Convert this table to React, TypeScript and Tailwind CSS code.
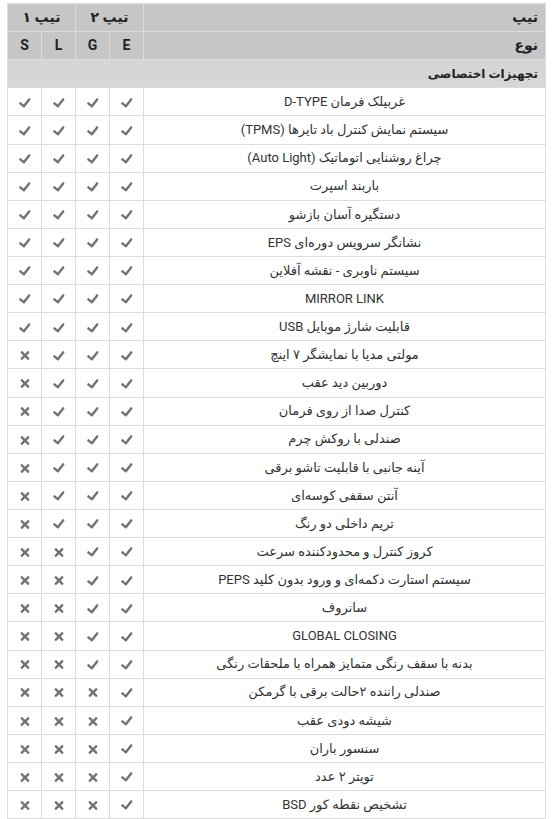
import React from 'react';

type Mark = 1 | 0;

const features: { name: string; v: Mark[] }[] = [
  { name: 'غربیلک فرمان D-TYPE', v: [1, 1, 1, 1] },
  { name: 'سیستم نمایش کنترل باد تایرها (TPMS)', v: [1, 1, 1, 1] },
  { name: 'چراغ روشنایی اتوماتیک (Auto Light)', v: [1, 1, 1, 1] },
  { name: 'باربند اسپرت', v: [1, 1, 1, 1] },
  { name: 'دستگیره آسان بازشو', v: [1, 1, 1, 1] },
  { name: 'نشانگر سرویس دوره‌ای EPS', v: [1, 1, 1, 1] },
  { name: 'سیستم ناوبری - نقشه آفلاین', v: [1, 1, 1, 1] },
  { name: 'MIRROR LINK', v: [1, 1, 1, 1] },
  { name: 'قابلیت شارژ موبایل USB', v: [1, 1, 1, 1] },
  { name: 'مولتی مدیا با نمایشگر ۷ اینچ', v: [1, 1, 1, 0] },
  { name: 'دوربین دید عقب', v: [1, 1, 1, 0] },
  { name: 'کنترل صدا از روی فرمان', v: [1, 1, 1, 0] },
  { name: 'صندلی با روکش چرم', v: [1, 1, 1, 0] },
  { name: 'آینه جانبی با قابلیت تاشو برقی', v: [1, 1, 1, 0] },
  { name: 'آنتن سقفی کوسه‌ای', v: [1, 1, 1, 0] },
  { name: 'تریم داخلی دو رنگ', v: [1, 1, 1, 0] },
  { name: 'کروز کنترل و محدودکننده سرعت', v: [1, 1, 0, 0] },
  { name: 'سیستم استارت دکمه‌ای و ورود بدون کلید PEPS', v: [1, 1, 0, 0] },
  { name: 'سانروف', v: [1, 1, 0, 0] },
  { name: 'GLOBAL CLOSING', v: [1, 1, 0, 0] },
  { name: 'بدنه با سقف رنگی متمایز همراه با ملحقات رنگی', v: [1, 1, 0, 0] },
  { name: 'صندلی راننده ۲حالت برقی با گرمکن', v: [1, 0, 0, 0] },
  { name: 'شیشه دودی عقب', v: [1, 0, 0, 0] },
  { name: 'سنسور باران', v: [1, 0, 0, 0] },
  { name: 'تویتر ۲ عدد', v: [1, 0, 0, 0] },
  { name: 'تشخیص نقطه کور BSD', v: [1, 0, 0, 0] },
];

function CheckIcon() {
  return (
    <svg viewBox="0 0 512 512" className="w-[12px] h-[12px] inline-block fill-[#737373] -rotate-6">
      <path d="M173.898 439.404l-166.4-166.4c-9.997-9.997-9.997-26.206 0-36.204l36.203-36.204c9.997-9.998 26.207-9.998 36.204 0L192 312.69 432.095 72.596c9.997-9.997 26.207-9.997 36.204 0l36.203 36.204c9.997 9.997 9.997 26.206 0 36.204l-294.4 294.401c-9.998 9.997-26.207 9.997-36.204-.001z" />
    </svg>
  );
}

function TimesIcon() {
  return (
    <svg viewBox="0 0 352 512" className="w-[10px] h-[13px] inline-block fill-[#737373]">
      <path d="M242.72 256l100.07-100.07c12.28-12.28 12.28-32.19 0-44.48l-22.24-22.24c-12.28-12.28-32.19-12.28-44.48 0L176 189.28 75.93 89.21c-12.28-12.28-32.19-12.28-44.48 0L9.21 111.45c-12.28 12.28-12.28 32.19 0 44.48L109.28 256 9.21 356.07c-12.28 12.28-12.28 32.19 0 44.48l22.24 22.24c12.28 12.28 32.2 12.28 44.48 0L176 322.72l100.07 100.07c12.28 12.28 32.2 12.28 44.48 0l22.24-22.24c12.28-12.28 12.28-32.19 0-44.48L242.72 256z" />
    </svg>
  );
}

export default function App() {
  const cell = 'border border-[#dcdcdc] h-[28.12px] p-0';
  return (
    <div className="bg-white min-h-screen pt-[3px] pl-[7px] pr-[6px] font-['Roboto','DejaVu_Sans',sans-serif]">
      <table dir="rtl" className="w-full border-collapse text-[13px] text-[#333]">
        <colgroup>
          <col />
          <col className="w-[34px]" />
          <col className="w-[34px]" />
          <col className="w-[34px]" />
          <col className="w-[34px]" />
        </colgroup>
        <thead className="bg-[#c6c6c6] text-[#222] text-[14px]">
          <tr>
            <th className={`${cell} text-right pr-[7px] font-bold`}>تیپ</th>
            <th colSpan={2} className={`${cell} text-center font-bold`}>تیپ ۲</th>
            <th colSpan={2} className={`${cell} text-center font-bold`}>تیپ ۱</th>
          </tr>
          <tr>
            <th className={`${cell} text-right pr-[7px] font-bold`}>نوع</th>
            {['E', 'G', 'L', 'S'].map((t) => (
              <th key={t} className={`${cell} text-center font-bold`}>{t}</th>
            ))}
          </tr>
        </thead>
        <tbody>
          <tr className="bg-[#d6d6d6]">
            <td colSpan={5} className={`${cell} text-right pr-[7px] font-bold text-[12px] text-[#222]`}>
              تجهیزات اختصاصی
            </td>
          </tr>
          {features.map((f) => (
            <tr key={f.name}>
              <td className={`${cell} text-center`}>{f.name}</td>
              {f.v.map((m, i) => (
                <td key={i} className={`${cell} text-center align-middle`}>
                  {m ? <CheckIcon /> : <TimesIcon />}
                </td>
              ))}
            </tr>
          ))}
        </tbody>
      </table>
    </div>
  );
}
